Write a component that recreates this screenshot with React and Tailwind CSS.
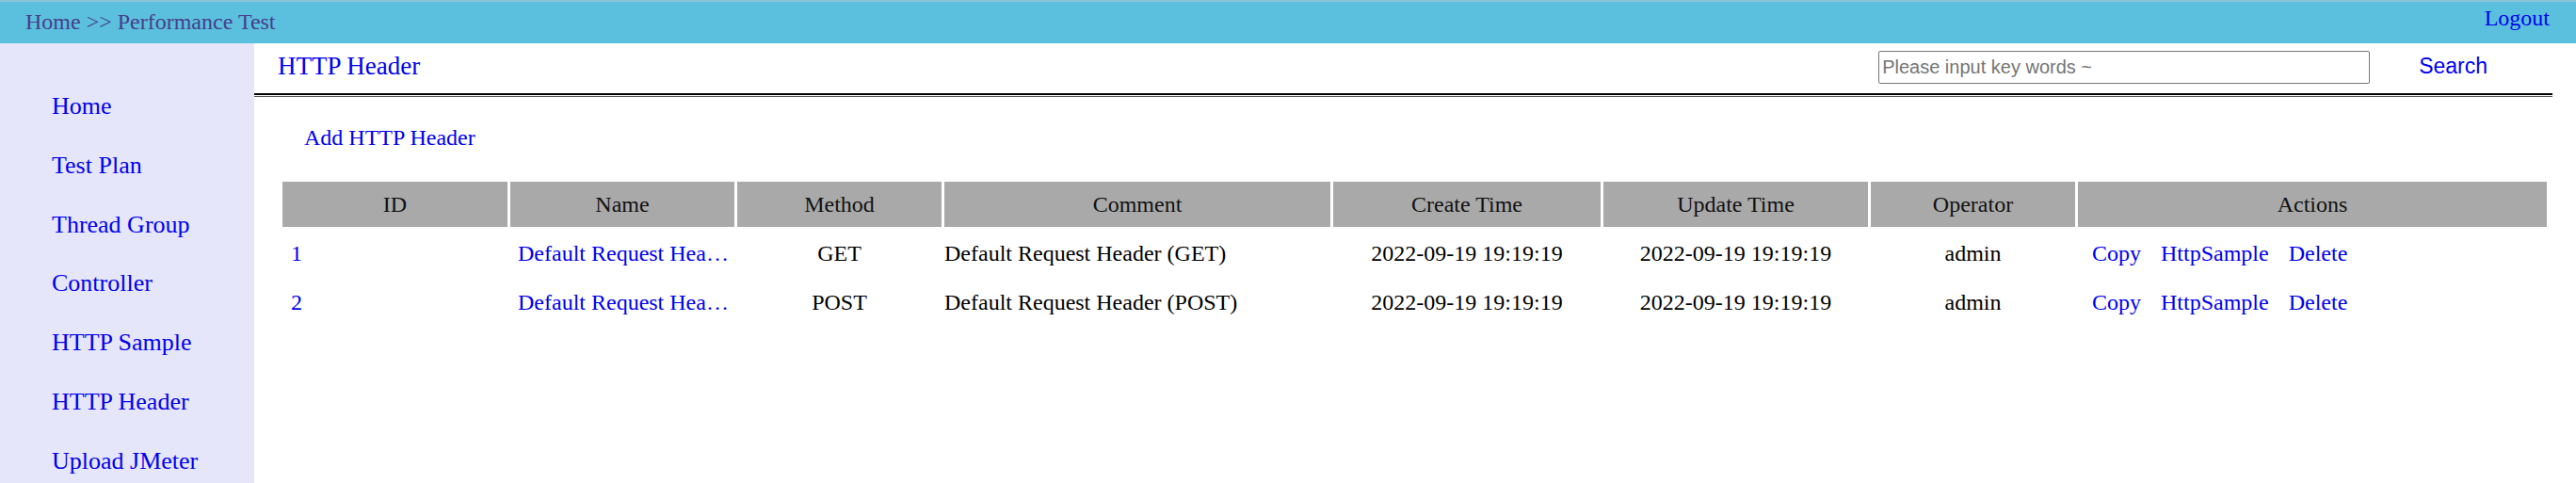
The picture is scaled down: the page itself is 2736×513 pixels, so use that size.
import React from 'react'

const MENU = ['Home', 'Test Plan', 'Thread Group', 'Controller', 'HTTP Sample', 'HTTP Header', 'Upload JMeter']

const COLUMNS = ['ID', 'Name', 'Method', 'Comment', 'Create Time', 'Update Time', 'Operator', 'Actions']

const HEADERS = [
  { id: 1, name: 'Default Request Header', method: 'GET', comment: 'Default Request Header (GET)', createTime: '2022-09-19 19:19:19', updateTime: '2022-09-19 19:19:19', operator: 'admin' },
  { id: 2, name: 'Default Request Header', method: 'POST', comment: 'Default Request Header (POST)', createTime: '2022-09-19 19:19:19', updateTime: '2022-09-19 19:19:19', operator: 'admin' },
]

export default function App() {
  return (
    <div className="h-screen flex flex-col bg-white font-['Liberation_Serif','Times_New_Roman',serif] text-black">
      {/* Top bar */}
      <div className="h-[46px] shrink-0 bg-[#5bc0de] border-t-2 border-[#8dc3d8] flex items-start justify-between">
        <span className="ml-[27px] mt-[7px] text-[24px] leading-[28px] text-[#483d8b]">Home &gt;&gt; Performance Test</span>
        <a className="mr-[28px] mt-[3px] text-[24px] leading-[28px] text-[#0000ee] cursor-pointer">Logout</a>
      </div>

      <div className="flex-1 flex min-h-0">
        {/* Side menu */}
        <div className="w-[270px] shrink-0 bg-[#e6e6fa] pt-9 pl-[55px]">
          {MENU.map(item => (
            <div key={item} className="text-[26px] leading-[62.8px] text-[#0000ee] cursor-pointer">{item}</div>
          ))}
        </div>

        {/* Content */}
        <div className="flex-1 pr-[25px]">
          <div className="h-[53px] pb-[5px] flex items-center">
            <h2 className="pl-[25px] text-[27px] leading-[30px] text-[#0000ee]">HTTP Header</h2>
            <input
              placeholder="Please input key words ~"
              className="ml-auto mt-[3px] w-[522px] h-[35px] px-[3px] border border-[#767676] rounded-[2px] font-['Liberation_Sans',Arial,sans-serif] text-[20px] placeholder:text-[#757575] outline-none"
            />
            <button className="ml-[52px] mr-[69px] font-['Liberation_Sans',Arial,sans-serif] text-[23px] text-[#0000ee] bg-transparent">Search</button>
          </div>
          <div className="h-[4px] border-t-2 border-b border-t-black border-b-[#555]" />

          <div className="pl-[53px] pt-[29px] text-[24px] leading-[28px]">
            <a className="text-[#0000ee] cursor-pointer">Add HTTP Header</a>
          </div>

          <div className="ml-[30px] mt-[33px] grid grid-cols-[239px_238px_217px_410px_284px_281px_217px_498px] gap-[3px] text-[24px]">
            {COLUMNS.map(col => (
              <div key={col} className="h-[48px] bg-[#a9a9a9] flex items-center justify-center text-[#111]">{col}</div>
            ))}
            {HEADERS.map(h => (
              <React.Fragment key={h.id}>
                <div className="h-[49px] flex items-center pl-[9px] text-[#0000ee]">{h.id}</div>
                <div className="h-[49px] flex items-center pl-[8px] pr-[4px] min-w-0">
                  <a className="truncate text-[#0000ee] cursor-pointer">{h.name}</a>
                </div>
                <div className="h-[49px] flex items-center justify-center">{h.method}</div>
                <div className="h-[49px] flex items-center">{h.comment}</div>
                <div className="h-[49px] flex items-center justify-center">{h.createTime}</div>
                <div className="h-[49px] flex items-center justify-center">{h.updateTime}</div>
                <div className="h-[49px] flex items-center justify-center">{h.operator}</div>
                <div className="h-[49px] flex items-center pl-[15px] gap-[21px] text-[#0000ee]">
                  <a className="cursor-pointer">Copy</a>
                  <a className="cursor-pointer">HttpSample</a>
                  <a className="cursor-pointer">Delete</a>
                </div>
              </React.Fragment>
            ))}
          </div>
        </div>
      </div>
    </div>
  )
}
